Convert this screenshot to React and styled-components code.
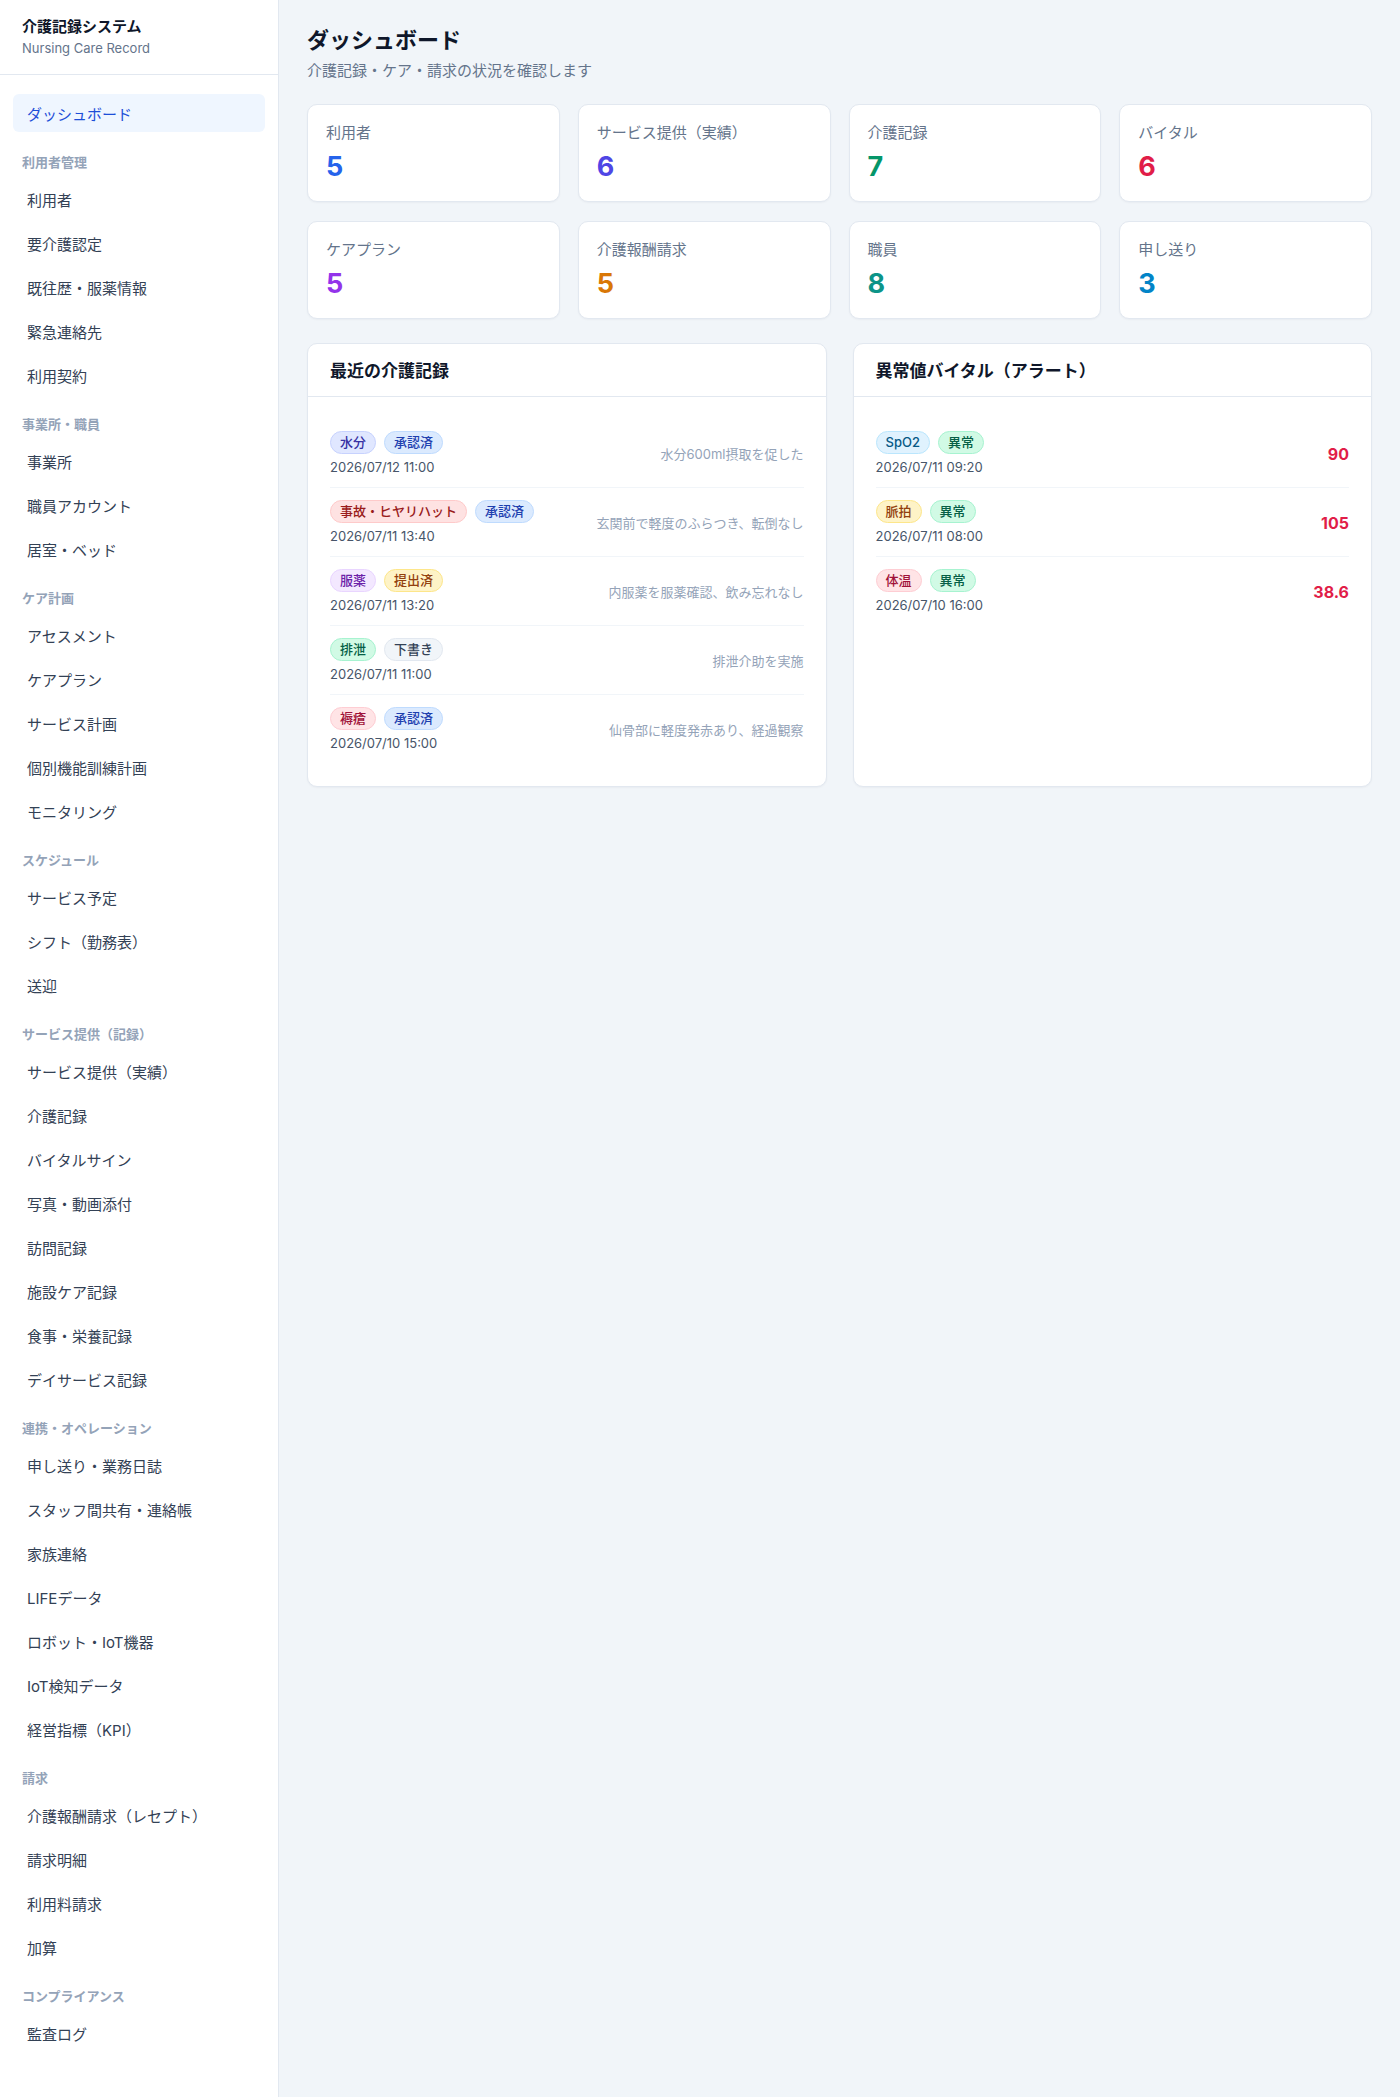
import styled, { createGlobalStyle } from "styled-components";

const GlobalStyle = createGlobalStyle`
  * { box-sizing: border-box; }
  body {
    margin: 0;
    font-family: "Inter", "Noto Sans CJK JP", sans-serif;
    background: #f1f5f9;
    color: #0f172a;
  }
`;

const tones = {
  indigo: { bg: "#e0e7ff", fg: "#3730a3", bd: "#c7d2fe" },
  blue: { bg: "#dbeafe", fg: "#1e40af", bd: "#bfdbfe" },
  red: { bg: "#fee2e2", fg: "#991b1b", bd: "#fecaca" },
  purple: { bg: "#f3e8ff", fg: "#6b21a8", bd: "#e9d5ff" },
  amber: { bg: "#fef3c7", fg: "#92400e", bd: "#fde68a" },
  emerald: { bg: "#d1fae5", fg: "#065f46", bd: "#a7f3d0" },
  slate: { bg: "#f1f5f9", fg: "#334155", bd: "#e2e8f0" },
  rose: { bg: "#ffe4e6", fg: "#9f1239", bd: "#fecdd3" },
  sky: { bg: "#e0f2fe", fg: "#075985", bd: "#bae6fd" },
};

const navSections = [
  { label: "利用者管理", items: ["利用者", "要介護認定", "既往歴・服薬情報", "緊急連絡先", "利用契約"] },
  { label: "事業所・職員", items: ["事業所", "職員アカウント", "居室・ベッド"] },
  { label: "ケア計画", items: ["アセスメント", "ケアプラン", "サービス計画", "個別機能訓練計画", "モニタリング"] },
  { label: "スケジュール", items: ["サービス予定", "シフト（勤務表）", "送迎"] },
  {
    label: "サービス提供（記録）",
    items: ["サービス提供（実績）", "介護記録", "バイタルサイン", "写真・動画添付", "訪問記録", "施設ケア記録", "食事・栄養記録", "デイサービス記録"],
  },
  {
    label: "連携・オペレーション",
    items: ["申し送り・業務日誌", "スタッフ間共有・連絡帳", "家族連絡", "LIFEデータ", "ロボット・IoT機器", "IoT検知データ", "経営指標（KPI）"],
  },
  { label: "請求", items: ["介護報酬請求（レセプト）", "請求明細", "利用料請求", "加算"] },
  { label: "コンプライアンス", items: ["監査ログ"] },
];

const stats = [
  { label: "利用者", value: 5, color: "#2563eb" },
  { label: "サービス提供（実績）", value: 6, color: "#4f46e5" },
  { label: "介護記録", value: 7, color: "#059669" },
  { label: "バイタル", value: 6, color: "#e11d48" },
  { label: "ケアプラン", value: 5, color: "#9333ea" },
  { label: "介護報酬請求", value: 5, color: "#d97706" },
  { label: "職員", value: 8, color: "#0d9488" },
  { label: "申し送り", value: 3, color: "#0284c7" },
];

const records = [
  { tags: [["水分", "indigo"], ["承認済", "blue"]], date: "2026/07/12 11:00", note: "水分600ml摂取を促した" },
  { tags: [["事故・ヒヤリハット", "red"], ["承認済", "blue"]], date: "2026/07/11 13:40", note: "玄関前で軽度のふらつき、転倒なし" },
  { tags: [["服薬", "purple"], ["提出済", "amber"]], date: "2026/07/11 13:20", note: "内服薬を服薬確認、飲み忘れなし" },
  { tags: [["排泄", "emerald"], ["下書き", "slate"]], date: "2026/07/11 11:00", note: "排泄介助を実施" },
  { tags: [["褥瘡", "rose"], ["承認済", "blue"]], date: "2026/07/10 15:00", note: "仙骨部に軽度発赤あり、経過観察" },
];

const vitals = [
  { tags: [["SpO2", "sky"], ["異常", "emerald"]], date: "2026/07/11 09:20", value: "90" },
  { tags: [["脈拍", "amber"], ["異常", "emerald"]], date: "2026/07/11 08:00", value: "105" },
  { tags: [["体温", "rose"], ["異常", "emerald"]], date: "2026/07/10 16:00", value: "38.6" },
];

const Layout = styled.div`
  display: flex;
  min-height: 100vh;
`;

const Sidebar = styled.aside`
  width: 279px;
  flex-shrink: 0;
  background: #ffffff;
  border-right: 1px solid #e2e8f0;
`;

const Brand = styled.div`
  padding: 17px 22px 18px;
  border-bottom: 1px solid #e2e8f0;
`;

const BrandTitle = styled.div`
  font-size: 15px;
  line-height: 20px;
  font-weight: 700;
  color: #0f172a;
`;

const BrandSub = styled.div`
  margin-top: 3px;
  font-size: 13px;
  line-height: 16px;
  color: #64748b;
`;

const Nav = styled.nav`
  padding: 19px 13px 40px;
`;

const NavItem = styled.a`
  display: flex;
  align-items: center;
  height: 38px;
  padding: 0 14px;
  border-radius: 6px;
  font-size: 15px;
  color: ${(p) => (p.$active ? "#1d4ed8" : "#334155")};
  background: ${(p) => (p.$active ? "#eff6ff" : "transparent")};
  text-decoration: none;
  cursor: pointer;
`;

const NavGroup = styled.div`
  display: flex;
  flex-direction: column;
  gap: 6px;
`;

const SectionLabel = styled.div`
  margin: 22px 0 10px;
  padding-left: 9px;
  font-size: 13px;
  line-height: 16px;
  font-weight: 600;
  color: #94a3b8;
`;

const Main = styled.main`
  flex: 1;
  padding: 25px 28px 40px;
`;

const PageTitle = styled.h1`
  margin: 0;
  font-size: 22px;
  line-height: 30px;
  font-weight: 700;
  color: #0f172a;
`;

const PageSub = styled.p`
  margin: 5px 0 0;
  font-size: 15px;
  line-height: 22px;
  color: #64748b;
`;

const StatGrid = styled.div`
  margin-top: 22px;
  display: grid;
  grid-template-columns: repeat(4, 1fr);
  gap: 19px 18px;
`;

const StatCard = styled.div`
  background: #ffffff;
  border: 1px solid #e2e8f0;
  border-radius: 10px;
  box-shadow: 0 1px 2px rgba(15, 23, 42, 0.04);
  padding: 17px 18px 18px;
`;

const StatLabel = styled.div`
  font-size: 15px;
  line-height: 22px;
  color: #64748b;
`;

const StatValue = styled.div`
  margin-top: 7px;
  font-size: 27px;
  line-height: 32px;
  font-weight: 700;
  color: ${(p) => p.$color};
`;

const PanelGrid = styled.div`
  margin-top: 24px;
  display: grid;
  grid-template-columns: 1fr 1fr;
  gap: 26px;
`;

const Panel = styled.section`
  background: #ffffff;
  border: 1px solid #e2e8f0;
  border-radius: 10px;
  box-shadow: 0 1px 2px rgba(15, 23, 42, 0.04);
`;

const PanelHeader = styled.h2`
  margin: 0;
  padding: 15px 22px 13px;
  border-bottom: 1px solid #e2e8f0;
  font-size: 17px;
  line-height: 24px;
  font-weight: 700;
  color: #0f172a;
`;

const PanelBody = styled.div`
  padding: 22px 22px 23px;
`;

const Row = styled.div`
  display: flex;
  align-items: center;
  justify-content: space-between;
  gap: 16px;
  padding: 12px 0 11px;
  border-bottom: 1px solid #f1f5f9;
  &:last-child {
    border-bottom: none;
  }
`;

const RowMain = styled.div`
  display: flex;
  flex-direction: column;
  gap: 4px;
`;

const Tags = styled.div`
  display: flex;
  gap: 8px;
`;

const Badge = styled.span`
  display: inline-block;
  padding: 2px 9px;
  border-radius: 999px;
  font-size: 13px;
  line-height: 17px;
  font-weight: 500;
  background: ${(p) => tones[p.$tone].bg};
  color: ${(p) => tones[p.$tone].fg};
  border: 1px solid ${(p) => tones[p.$tone].bd};
`;

const DateText = styled.div`
  font-size: 13px;
  line-height: 18px;
  color: #475569;
`;

const Note = styled.div`
  font-size: 13px;
  line-height: 18px;
  color: #94a3b8;
  text-align: right;
`;

const VitalValue = styled.div`
  font-size: 16px;
  line-height: 22px;
  font-weight: 700;
  color: #e11d48;
`;

const TagList = ({ tags }) => (
  <Tags>
    {tags.map(([text, tone]) => (
      <Badge key={text} $tone={tone}>
        {text}
      </Badge>
    ))}
  </Tags>
);

const App = () => {
  return (
    <>
      <GlobalStyle />
      <Layout>
        <Sidebar>
          <Brand>
            <BrandTitle>介護記録システム</BrandTitle>
            <BrandSub>Nursing Care Record</BrandSub>
          </Brand>
          <Nav>
            <NavItem $active>ダッシュボード</NavItem>
            {navSections.map((section) => (
              <div key={section.label}>
                <SectionLabel>{section.label}</SectionLabel>
                <NavGroup>
                  {section.items.map((item) => (
                    <NavItem key={item}>{item}</NavItem>
                  ))}
                </NavGroup>
              </div>
            ))}
          </Nav>
        </Sidebar>

        <Main>
          <PageTitle>ダッシュボード</PageTitle>
          <PageSub>介護記録・ケア・請求の状況を確認します</PageSub>

          <StatGrid>
            {stats.map((s) => (
              <StatCard key={s.label}>
                <StatLabel>{s.label}</StatLabel>
                <StatValue $color={s.color}>{s.value}</StatValue>
              </StatCard>
            ))}
          </StatGrid>

          <PanelGrid>
            <Panel>
              <PanelHeader>最近の介護記録</PanelHeader>
              <PanelBody>
                {records.map((r) => (
                  <Row key={r.date}>
                    <RowMain>
                      <TagList tags={r.tags} />
                      <DateText>{r.date}</DateText>
                    </RowMain>
                    <Note>{r.note}</Note>
                  </Row>
                ))}
              </PanelBody>
            </Panel>
            <Panel>
              <PanelHeader>異常値バイタル（アラート）</PanelHeader>
              <PanelBody>
                {vitals.map((v) => (
                  <Row key={v.date}>
                    <RowMain>
                      <TagList tags={v.tags} />
                      <DateText>{v.date}</DateText>
                    </RowMain>
                    <VitalValue>{v.value}</VitalValue>
                  </Row>
                ))}
              </PanelBody>
            </Panel>
          </PanelGrid>
        </Main>
      </Layout>
    </>
  );
};

export default App;
